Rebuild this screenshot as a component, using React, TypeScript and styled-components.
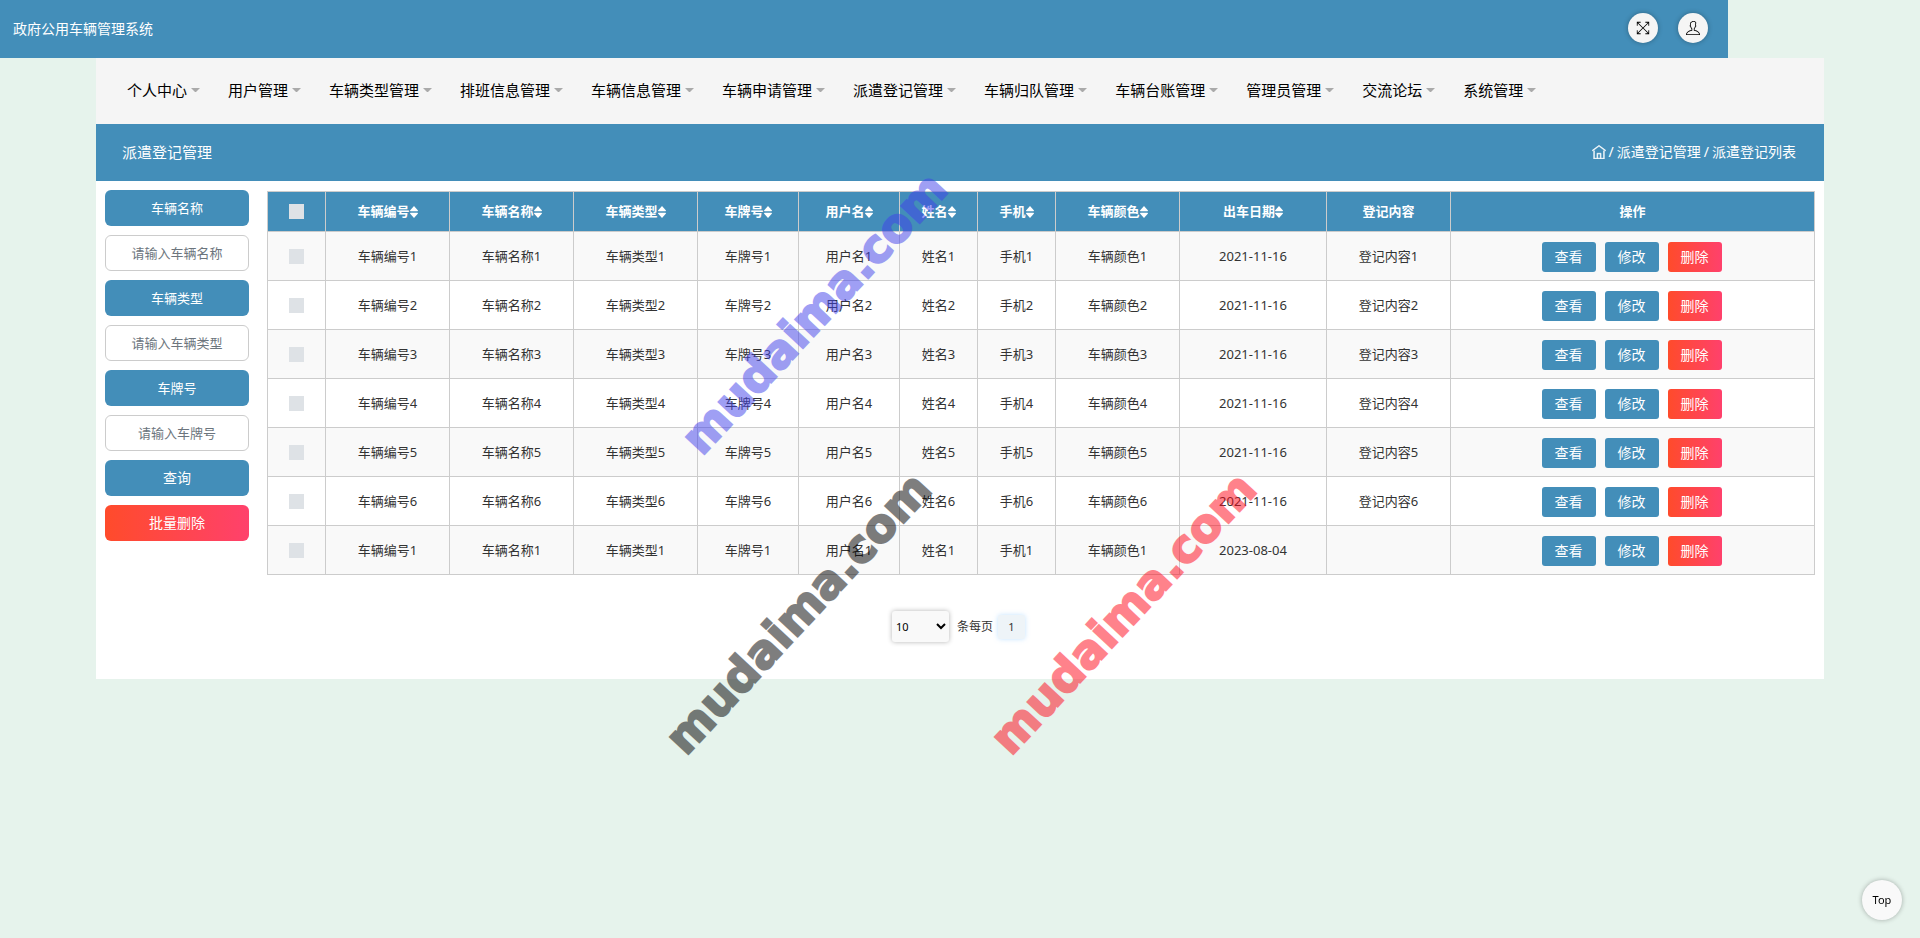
import React from "react";
import styled, { createGlobalStyle } from "styled-components";
import { TfiFullscreen, TfiHome, TfiUser } from "react-icons/tfi";

const blue = "#438eb9";
const danger = "linear-gradient(to right, #ff4b2b, #ff416c)";
const line = "#cccccc";

const GlobalStyle = createGlobalStyle`
  *, *::before, *::after { box-sizing: border-box; }
  body {
    margin: 0;
    min-height: 100vh;
    background: #e6f3ec;
    color: #333333;
    font: 13px/20px "Noto Sans", "Noto Sans CJK SC", sans-serif;
  }
  button, input, select { font: inherit; }
  a { color: inherit; text-decoration: none; }
`;

const Page = styled.div`
  position: relative;
  min-height: 100vh;
`;

const TopBar = styled.header`
  display: flex;
  align-items: center;
  justify-content: space-between;
  width: 90%;
  height: 58px;
  padding: 0 20px 0 13px;
  background: ${blue};
  color: #ffffff;
`;

const SystemName = styled.h1`
  margin: 0;
  font-size: 14px;
  font-weight: 400;
`;

const TopActions = styled.div`
  display: flex;
  gap: 20px;
  padding-bottom: 3px;
`;

const RoundButton = styled.button`
  display: grid;
  place-items: center;
  width: 30px;
  height: 30px;
  padding: 0;
  border: 0;
  border-radius: 50%;
  background: #f5f5f5;
  color: #000000;
  font-size: 14px;
  box-shadow: 0 0 5px rgba(0, 0, 0, 0.3);
`;

const Container = styled.main`
  width: 90%;
  margin: 0 auto;
  background: #ffffff;
`;

const Nav = styled.nav`
  display: flex;
  flex-wrap: wrap;
  align-items: center;
  min-height: 66px;
  padding: 0 17px 2px;
  background: #f5f5f5;
`;

const NavLink = styled.a`
  display: flex;
  align-items: center;
  gap: 4px;
  padding: 0 14px;
  color: #000000;
  font-size: 15px;

  &::after {
    content: "";
    width: 9px;
    border: solid transparent;
    border-width: 4px 4px 0;
    border-top-color: #aaaaaa;
  }
`;

const TitleBar = styled.div`
  display: flex;
  align-items: center;
  justify-content: space-between;
  height: 57px;
  padding: 0 28px 2px 26px;
  background: ${blue};
  color: #ffffff;
`;

const PageTitle = styled.h2`
  margin: 0;
  font-size: 15px;
  font-weight: 400;
`;

const Breadcrumb = styled.div`
  display: flex;
  align-items: center;
  gap: 3px;
  font-size: 14px;

  a { display: flex; }
  svg { stroke-width: 0.6; }
`;

const Content = styled.div`
  display: flex;
  align-items: flex-start;
  gap: 18px;
  padding: 9px 9px 0;
`;

const Filters = styled.form`
  display: flex;
  flex-direction: column;
  flex: none;
  gap: 9px;
  width: 144px;
`;

const FilterLabel = styled.label`
  height: 36px;
  border-radius: 6px;
  background: ${blue};
  color: #ffffff;
  line-height: 36px;
  text-align: center;
`;

const FilterInput = styled.input`
  width: 100%;
  height: 36px;
  padding: 0 8px;
  border: 1px solid ${line};
  border-radius: 6px;
  background: #ffffff;
  text-align: center;

  &::placeholder { color: #6c757d; opacity: 1; }
`;

const FilterButton = styled.button<{ $danger?: boolean }>`
  height: 36px;
  border: 0;
  border-radius: 6px;
  background: ${(p) => (p.$danger ? danger : blue)};
  color: #ffffff;
  font-size: 14px;
`;

const Table = styled.table`
  flex: 1;
  width: 100%;
  min-width: 0;
  margin-top: 1px;
  border-collapse: collapse;
  table-layout: fixed;
  text-align: center;

  th, td {
    padding: 0;
    border: 1px solid ${line};
  }
`;

const Column = styled.col<{ $width?: number }>`
  width: ${(p) => (p.$width ? `${p.$width}px` : "auto")};
`;

const HeadCell = styled.th`
  && { padding-bottom: 1px; }
  height: 40px;
  background: ${blue};
  color: #ffffff;
  font-weight: 700;
  white-space: nowrap;
`;

const Row = styled.tr`
  height: 49px;
  &:nth-child(odd) { background: #f9f9f9; }
`;

const SortIcon = styled.svg`
  width: 8px;
  height: 12px;
  vertical-align: -2px;
  fill: currentColor;
`;

const Check = styled.input`
  display: block;
  width: 15px;
  height: 15px;
  margin: 0 auto;
  appearance: none;
  background: #dee2e6;

  &:checked { background: #6c757d; }
`;

const RowActions = styled.div`
  display: flex;
  justify-content: center;
  gap: 9px;
  padding: 2px 2px 0 0;
`;

const ActionButton = styled.button<{ $danger?: boolean }>`
  width: 54px;
  height: 30px;
  padding: 0;
  border: 0;
  border-radius: 3px;
  background: ${(p) => (p.$danger ? danger : blue)};
  color: #ffffff;
  font-size: 14px;
`;

const Pagination = styled.div`
  display: flex;
  align-items: center;
  justify-content: center;
  padding: 36px 3px 37px 0;
  font-size: 12px;
`;

const PageSize = styled.label`
  display: flex;
  align-items: center;
  gap: 8px;
`;

const SizeSelect = styled.select`
  width: 57px;
  height: 31px;
  padding: 0;
  border: 0;
  border-radius: 3px;
  background: #f9f9f9;
  color: #000000;
  font-size: 11px;
  box-shadow: 0 0 5px rgba(0, 0, 0, 0.3);
`;

const PageButton = styled.button`
  width: 27px;
  height: 24px;
  margin-left: 5px;
  padding: 0;
  border: 0;
  border-radius: 3px;
  background: #eef4f8;
  color: #333333;
  font-size: 11px;
  box-shadow: 0 0 5px rgba(170, 215, 255, 0.7);
`;

const BackToTop = styled.a`
  position: fixed;
  right: 18px;
  bottom: 18px;
  width: 40px;
  height: 40px;
  border-radius: 50%;
  background: #f9f9f9;
  color: #000000;
  font-size: 11px;
  line-height: 40px;
  text-align: center;
  box-shadow: 0 0 5px rgba(0, 0, 0, 0.3);
`;

const Watermark = styled.span<{ $x: number; $y: number; $color: string }>`
  position: absolute;
  left: ${(p) => p.$x}px;
  top: ${(p) => p.$y}px;
  color: ${(p) => p.$color};
  font: 700 46px/1 "DejaVu Sans", sans-serif;
  -webkit-text-stroke: 2px ${(p) => p.$color};
  opacity: 0.5;
  transform: translate(-50%, -50%) rotate(-47deg);
  pointer-events: none;
`;

const menus = [
  "个人中心", "用户管理", "车辆类型管理", "排班信息管理", "车辆信息管理", "车辆申请管理",
  "派遣登记管理", "车辆归队管理", "车辆台账管理", "管理员管理", "交流论坛", "系统管理",
];

const filters = [
  { id: "name", label: "车辆名称" },
  { id: "type", label: "车辆类型" },
  { id: "plate", label: "车牌号" },
];

const columns = [
  { title: "车辆编号", width: 124, sortable: true },
  { title: "车辆名称", width: 124, sortable: true },
  { title: "车辆类型", width: 124, sortable: true },
  { title: "车牌号", width: 101, sortable: true },
  { title: "用户名", width: 101, sortable: true },
  { title: "姓名", width: 78, sortable: true },
  { title: "手机", width: 78, sortable: true },
  { title: "车辆颜色", width: 124, sortable: true },
  { title: "出车日期", width: 147, sortable: true },
  { title: "登记内容", width: 124, sortable: false },
];

const records = [
  ...[1, 2, 3, 4, 5, 6].map((n) => ({ n, date: "2021-11-16", note: `登记内容${n}` })),
  { n: 1, date: "2023-08-04", note: "" },
];

const fields = ["车辆编号", "车辆名称", "车辆类型", "车牌号", "用户名", "姓名", "手机", "车辆颜色"];

const watermarks = [
  { x: 814, y: 313, color: "#4141eb" },
  { x: 798, y: 613, color: "#000000" },
  { x: 1123, y: 613, color: "#ff0819" },
];

export default function App() {
  return (
    <Page id="top">
      <GlobalStyle />
      <TopBar>
        <SystemName>政府公用车辆管理系统</SystemName>
        <TopActions>
          <RoundButton type="button" aria-label="全屏"><TfiFullscreen /></RoundButton>
          <RoundButton type="button" aria-label="用户"><TfiUser /></RoundButton>
        </TopActions>
      </TopBar>

      <Container>
        <Nav>
          {menus.map((m) => <NavLink key={m} href="#">{m}</NavLink>)}
        </Nav>
        <TitleBar>
          <PageTitle>派遣登记管理</PageTitle>
          <Breadcrumb>
            <a href="#" aria-label="首页"><TfiHome /></a>
            <span>/</span>
            <span>派遣登记管理</span>
            <span>/</span>
            <span>派遣登记列表</span>
          </Breadcrumb>
        </TitleBar>

        <Content>
          <Filters onSubmit={(e) => e.preventDefault()}>
            {filters.map((f) => (
              <React.Fragment key={f.id}>
                <FilterLabel htmlFor={f.id}>{f.label}</FilterLabel>
                <FilterInput id={f.id} placeholder={`请输入${f.label}`} />
              </React.Fragment>
            ))}
            <FilterButton type="submit">查询</FilterButton>
            <FilterButton type="button" $danger>批量删除</FilterButton>
          </Filters>

          <Table>
            <colgroup>
              <Column $width={58} />
              {columns.map((c) => <Column key={c.title} $width={c.width} />)}
              <Column />
            </colgroup>
            <thead>
              <tr>
                <HeadCell><Check type="checkbox" aria-label="全选" /></HeadCell>
                {columns.map((c) => (
                  <HeadCell key={c.title}>
                    {c.title}
                    {c.sortable && (
                      <SortIcon viewBox="0 0 8 12" aria-hidden="true">
                        <path d="M4 0 8 4.6Q8 5.3 7.4 5.3H.6Q0 5.3 0 4.6ZM4 12 8 7.4Q8 6.7 7.4 6.7H.6Q0 6.7 0 7.4Z" />
                      </SortIcon>
                    )}
                  </HeadCell>
                ))}
                <HeadCell>操作</HeadCell>
              </tr>
            </thead>
            <tbody>
              {records.map((r, i) => (
                <Row key={i}>
                  <td><Check type="checkbox" aria-label={`选择第${i + 1}行`} /></td>
                  {fields.map((f) => <td key={f}>{f}{r.n}</td>)}
                  <td>{r.date}</td>
                  <td>{r.note}</td>
                  <td>
                    <RowActions>
                      <ActionButton type="button">查看</ActionButton>
                      <ActionButton type="button">修改</ActionButton>
                      <ActionButton type="button" $danger>删除</ActionButton>
                    </RowActions>
                  </td>
                </Row>
              ))}
            </tbody>
          </Table>
        </Content>

        <Pagination>
          <PageSize>
            <SizeSelect defaultValue="10">
              <option>10</option>
              <option>25</option>
              <option>50</option>
            </SizeSelect>
            条每页
          </PageSize>
          <PageButton type="button">1</PageButton>
        </Pagination>
      </Container>

      {watermarks.map((w) => (
        <Watermark key={w.color} $x={w.x} $y={w.y} $color={w.color} aria-hidden="true">
          mudaima.com
        </Watermark>
      ))}
      <BackToTop href="#top">Top</BackToTop>
    </Page>
  );
}
